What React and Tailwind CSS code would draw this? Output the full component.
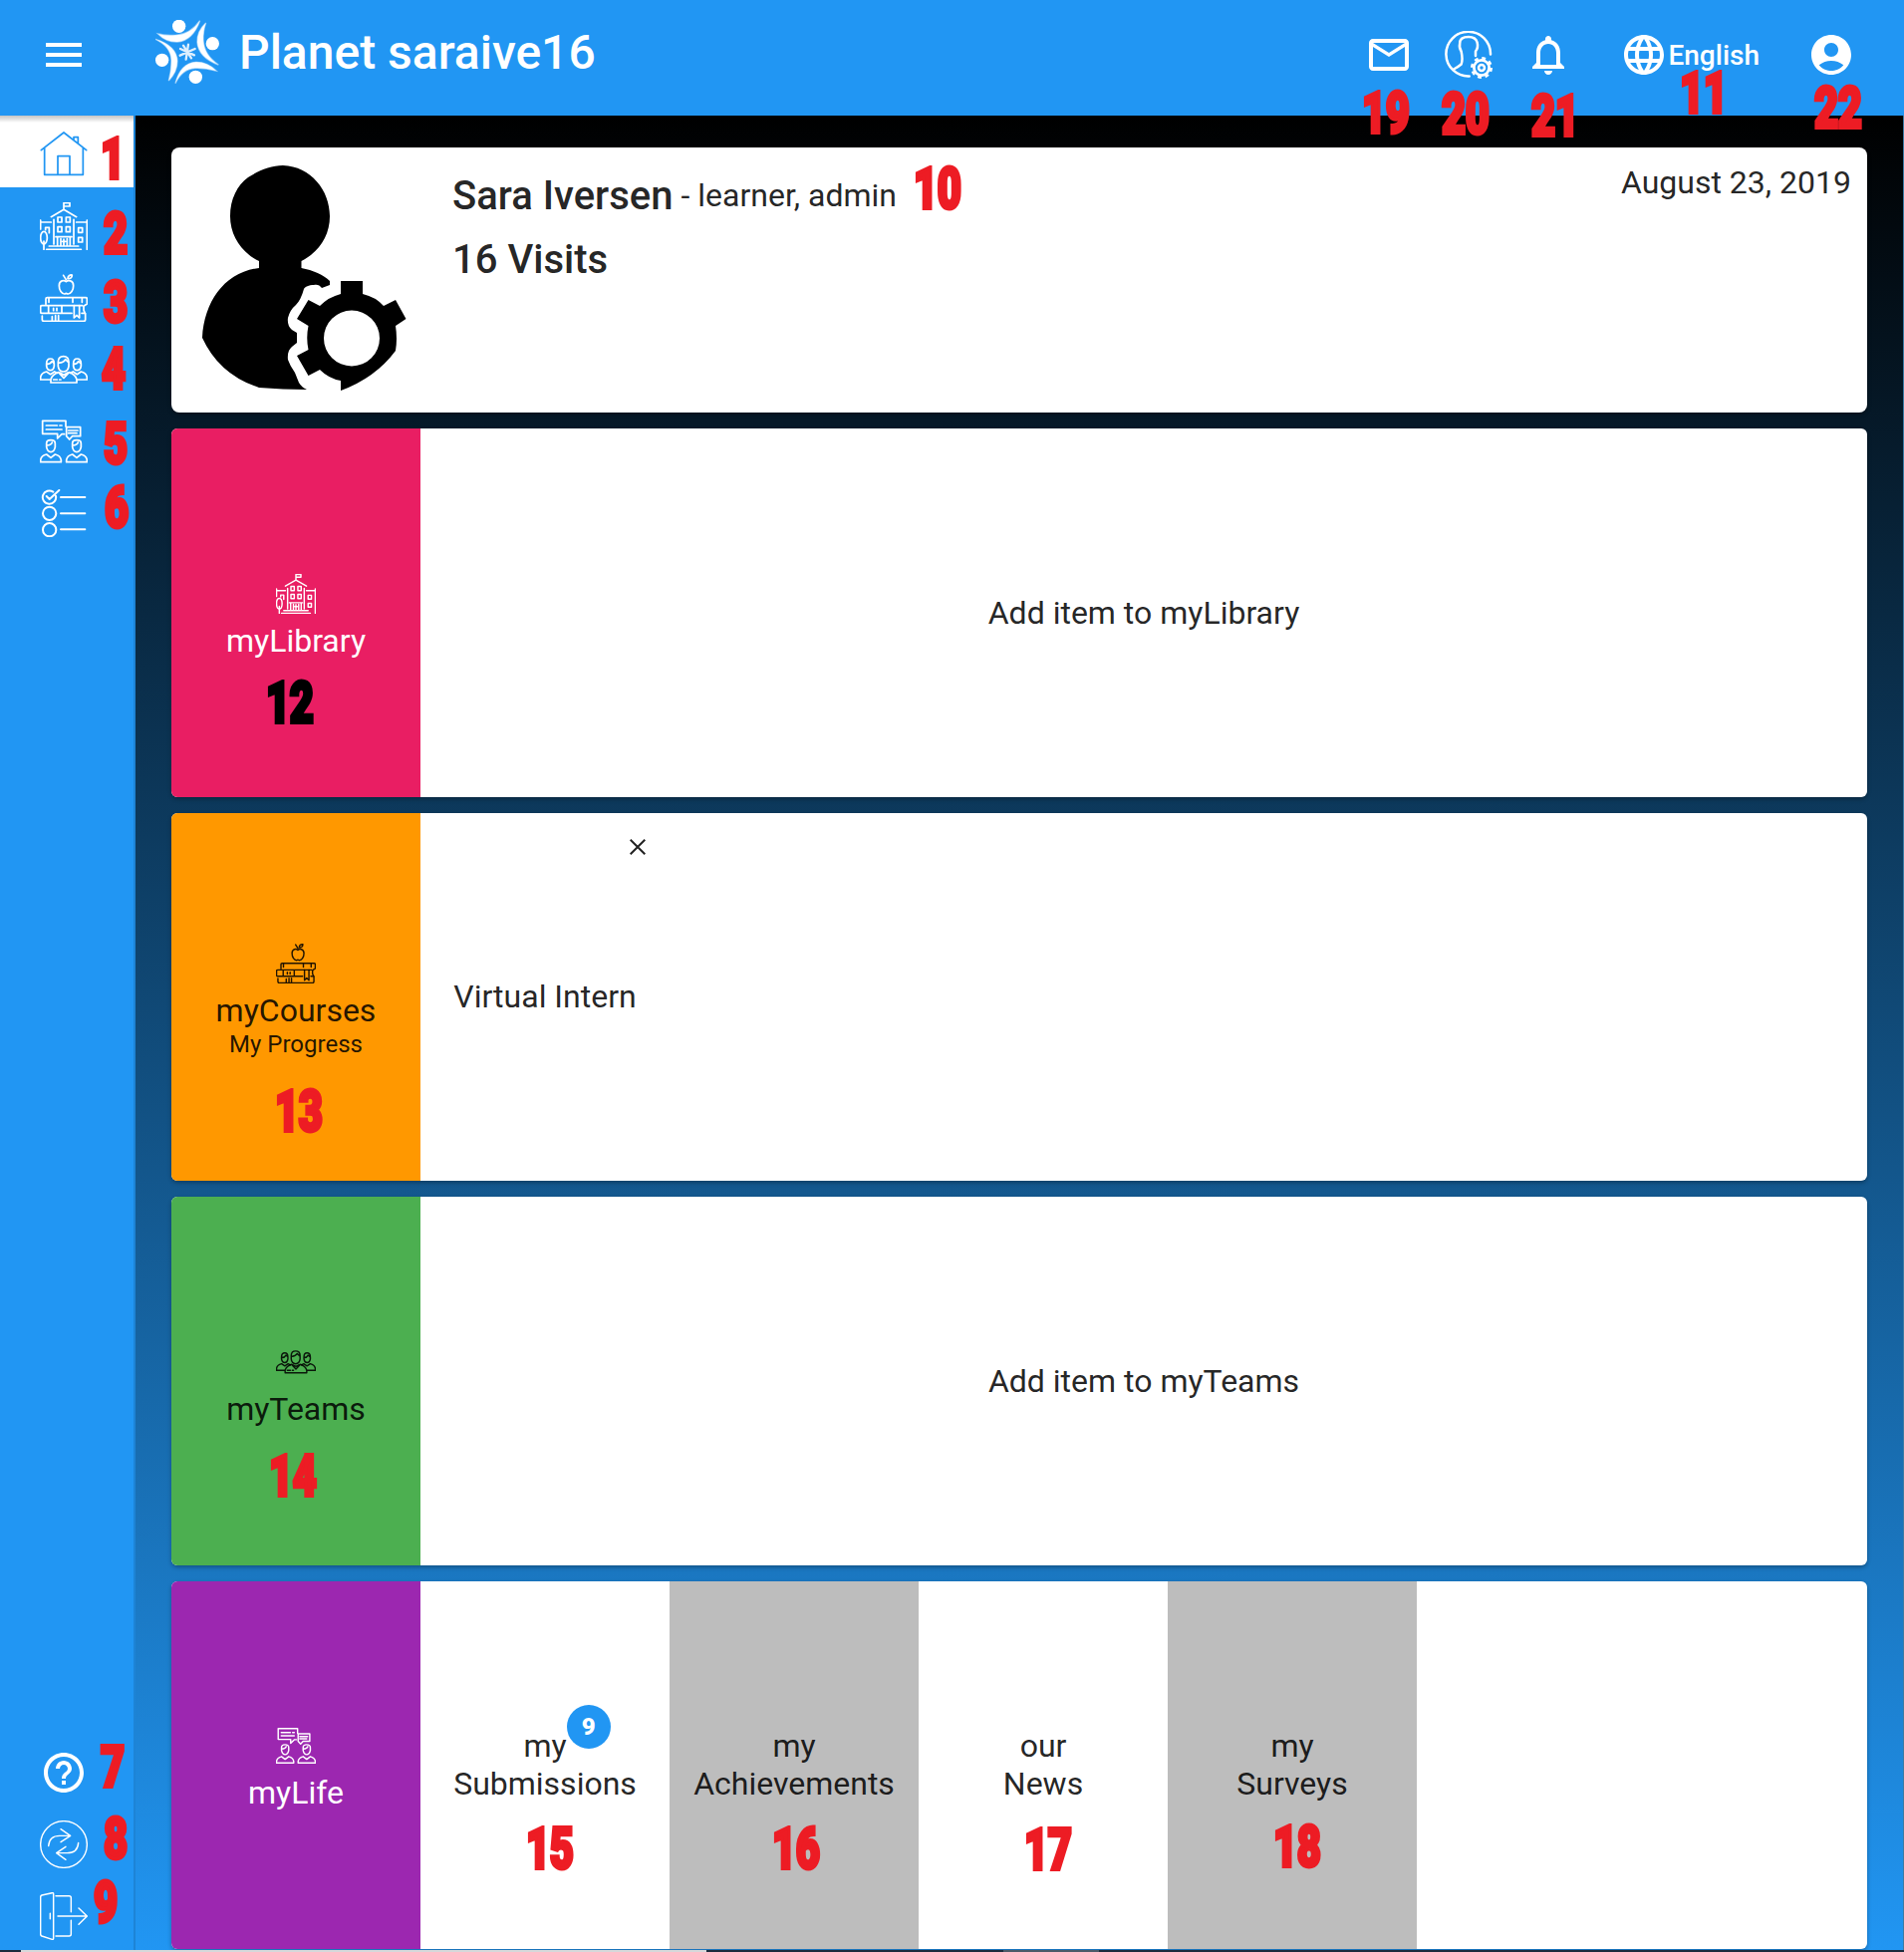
import React from "react";
import {
  MdMenu,
  MdMailOutline,
  MdNotificationsNone,
  MdLanguage,
  MdAccountCircle,
  MdHelpOutline,
} from "react-icons/md";

function LineIcon({ viewBox, className, width = 5.2, children }) {
  return (
    <svg
      viewBox={viewBox}
      className={className}
      fill="none"
      stroke="currentColor"
      strokeWidth={width}
      strokeLinecap="round"
      strokeLinejoin="round"
    >
      {children}
    </svg>
  );
}

const HomeIcon = ({ className }) => (
  <LineIcon viewBox="120 63 144 144" className={className}>
    <path d="M124 122L192 69L260 122M134 116V196H250V116M174 196V140H210V196M222 92V83H235V102" />
  </LineIcon>
);

const SchoolIcon = ({ className }) => (
  <LineIcon viewBox="120 279 144 144" className={className}>
    <path d="M192 300V281H210V291H194M154 323L192 301L230 323M162 331V405M222 331V405" />
    <path d="M122 333V360M124 339H154M230 339H262M262 333V421" />
    <ellipse cx="132" cy="386" rx="10" ry="19" />
    <path d="M132 396V421M137 362V355H148V371" />
    <path d="M174 324h12v15h-12zM199 324h12v15h-12zM174 353h12v15h-12zM199 353h12v15h-12zM236 356h12v14h-12zM236 385h12v14h-12z" />
    <path d="M168 383H216M173 383V408M211 383V408M183 389V408M202 389V408M192 390V408M188 397H197M148 411H236M140 421H244" />
  </LineIcon>
);

const BooksIcon = ({ className }) => (
  <LineIcon viewBox="120 495 144 144" className={className}>
    <path d="M199 518c-5-5-21-5-21 12c0 14 8 25 16 25c3 0 4-2 5-2c1 0 3 2 6 2c8 0 16-11 16-25c0-17-17-17-22-12z" />
    <path d="M199 512L191 499M204 509c0-8 6-12 13-11c0 8-5 12-13 11z" />
    <path d="M138 586V570Q138 566 142 566H258Q262 566 262 570V585L254 590M147 566v14M219 566v14M247 566v14" />
    <path d="M248 590H126Q122 590 122 594V609Q122 613 126 613H216M252 592V604L256 613H246M146 590V613M186 590V613M161 598v7M171 598v7" />
    <path d="M223 590V627L231 619L239 627V590M127 621V632Q127 637 132 637H252Q257 637 257 632V614M157 623v12M167 620v15M176 620v15" />
  </LineIcon>
);

const TeamsIcon = ({ className }) => (
  <LineIcon viewBox="120 711 144 144" className={className}>
    <path d="M175 760Q175 743 191 743Q207 743 207 760V772Q205 789 191 789Q177 789 175 772ZM176 762Q190 763 197 752L207 762" />
    <path d="M140 765Q140 750 152 750Q163 750 163 765V772Q161 785 152 785Q142 785 140 772ZM141 767Q152 766 156 758L163 764" />
    <path d="M221 765Q221 750 232 750Q244 750 244 765V772Q242 785 232 785Q223 785 221 772ZM222 767Q232 766 236 758L243 764" />
    <path d="M150 813H122V806Q124 793 140 789L152 797L164 789L172 793M234 813H262V806Q260 793 244 789L232 797L220 789L212 793" />
    <path d="M153 822V812Q158 797 176 791L192 808L208 791Q226 797 231 812V822ZM180 792L192 799L204 792M161 813H172M179 813H183" />
  </LineIcon>
);

const ChatIcon = ({ className }) => (
  <LineIcon viewBox="120 927 144 144" className={className}>
    <path d="M198 954V937H128V976H173V990L186 977H194M139 951H172M180 951H186M139 963H186" />
    <path d="M200 956H242V983H218L209 993L200 983ZM206 966H234M206 974H231" />
    <path d="M140 1005Q140 995 153 995Q166 995 166 1005V1016Q163 1031 153 1031Q143 1031 140 1016ZM141 1011Q154 1010 157 1002" />
    <path d="M122 1061V1055Q124 1042 140 1038L153 1048L166 1038Q182 1042 184 1055V1061Z" />
    <path d="M218 1005Q218 995 231 995Q244 995 244 1005V1016Q241 1031 231 1031Q221 1031 218 1016ZM219 1011Q232 1010 235 1002" />
    <path d="M200 1061V1055Q202 1042 218 1038L231 1048L244 1038Q260 1042 262 1055V1061Z" />
  </LineIcon>
);

const SurveyIcon = ({ className }) => (
  <LineIcon viewBox="120 1143 144 144" className={className} width={6}>
    <path d="M160 1151A20 20 0 1 0 168 1163M140 1164L149 1173L178 1146" />
    <circle cx="149" cy="1216" r="20" />
    <circle cx="149" cy="1265" r="20" />
    <path d="M183 1167H256M183 1216H256M183 1264H256" />
  </LineIcon>
);

const SyncIcon = ({ className }) => (
  <LineIcon viewBox="120 321 144 144" className={className} width={4.2}>
    <circle cx="192" cy="393" r="70" />
    <path d="M146 398Q148 367 180 367H212M183 347L212 367L183 386M236 388Q234 419 202 419H170M198 400L170 419L198 439" />
  </LineIcon>
);

const LogoutIcon = ({ className }) => (
  <LineIcon viewBox="120 537 144 144" className={className} width={4.4}>
    <path d="M122 552Q122 548 126 546L157 539Q161 538 161 542V676Q161 680 157 679L126 669Q122 667 122 663ZM151 601V617" />
    <path d="M168 548H208Q214 548 214 554V596M214 622V663Q214 669 208 669H168M174 609H262M237 585L262 609L237 634" />
  </LineIcon>
);

const ManagerIcon = ({ className }) => (
  <LineIcon viewBox="0 0 48 48" className={className} width={2.5}>
    <path d="M46 23.5A22.3 22.3 0 1 0 24.7 45.4" />
    <path d="M31 25V20.5Q34 17 32.6 11.5Q31 6 24 6Q15 6 15.2 12.5Q14.2 17 16.6 20.5Q18.5 29 16.6 33.5Q13 36.5 9 38.5" />
    <circle cx="37" cy="37" r="3" />
    <circle cx="37" cy="37" r="7.6" strokeWidth="2.8" />
    <circle cx="37" cy="37" r="9.6" strokeWidth="2.8" strokeLinecap="butt" strokeDasharray="3.77 3.77" />
  </LineIcon>
);

const Logo = () => (
  <svg viewBox="30 30 192 192" className="size-16" fill="white">
    <circle cx="101" cy="49" r="20" />
    <circle cx="202" cy="101" r="20" />
    <circle cx="50" cy="151" r="20" />
    <circle cx="151" cy="202" r="20" />
    <g stroke="white" strokeWidth="4" strokeOpacity="0.5">
      <path d="M38 72Q60 78 90 76Q135 74 164 32Q142 92 96 96Q62 97 38 72Z" />
      <path d="M182 39Q173 62 174 92Q177 137 220 165Q160 143 156 97Q155 64 182 39Z" />
      <path d="M30 88Q76 110 78 150Q79 180 70 213Q96 186 96 154Q94 108 30 88Z" />
      <path d="M90 221Q110 178 150 175Q180 174 213 183Q186 156 152 157Q106 160 90 221Z" />
    </g>
    <path
      d="M129 104L122 149M105 117L147 136M149 117L104 137M114 107L138 145"
      stroke="white"
      strokeWidth="7"
      strokeOpacity="0.85"
      strokeLinecap="round"
    />
  </svg>
);

const Avatar = () => (
  <svg viewBox="200 160 210 236" className="ml-7 mt-3 h-[236px] w-[210px] shrink-0" fill="black">
    <path d="M284 166C312 167 331 191 331 217C331 237 320 253 302.500 262V269C314 271 325 276 331 282V286L323 289C321 286 318 285 315 286C310 286 306 288 305 290Q302 301 297 306Q291 311 289 319Q288 327 293 331L298 334V344L293 348Q288 352 289 361Q291 367 296 374L300 384Q303 389 308 391Q284 391 260 389Q220 376 203 339C205 302 226 273 260 269V262C243 254 231 237 231 217C231 200 238 186 249 178C260 171 272 166 284 166Z" />
    <path
      fillRule="evenodd"
      d="M342 282H364V295Q377 298 385 307L397 301L407.500 320L397 327Q399 340 397 352Q377 379 342 392V382Q330 380 321 371L309.500 377L298 357L309.500 351Q307 339 309.500 327L298 320L309.500 301L321 307Q330 298 342 295ZM353 311.500A28 28 0 1 0 353 367.500A28 28 0 1 0 353 311.500Z"
    />
  </svg>
);

const sideTop = [SchoolIcon, BooksIcon, TeamsIcon, ChatIcon, SurveyIcon];

function Card({ color, icon: Icon, title, subtitle, children }) {
  return (
    <section className="flex overflow-hidden rounded-md bg-white shadow-[0_2px_4px_rgba(0,0,0,0.3)]">
      <div
        className={`flex w-[250px] shrink-0 flex-col items-center justify-center ${subtitle ? "pt-[9px]" : "pt-[7px]"} ${color}`}
      >
        <Icon className="mb-[9px] size-10" />
        <h2 className="leading-9">{title}</h2>
        {subtitle && <span className="mt-px text-2xl leading-[30px]">{subtitle}</span>}
      </div>
      {children}
    </section>
  );
}

const Empty = ({ children }) => (
  <div className="flex flex-1 items-center justify-center">{children}</div>
);

const lifeTiles = [
  { a: "my", b: "Submissions", badge: 9, bg: "bg-white" },
  { a: "my", b: "Achievements", bg: "bg-[#bdbdbd]" },
  { a: "our", b: "News", bg: "bg-white" },
  { a: "my", b: "Surveys", bg: "bg-[#bdbdbd]" },
];

const red = "text-[#ed1c24]";
const marks = [
  { n: 1, c: "left-[101px] top-[130px]" },
  { n: 2, c: "left-[104px] top-[205px]" },
  { n: 3, c: "left-[104px] top-[274px]" },
  { n: 4, c: "left-[102px] top-[341px]" },
  { n: 5, c: "left-[104px] top-[416px]" },
  { n: 6, c: "left-[105px] top-[480px]" },
  { n: 7, c: "left-[101px] top-[1744px]" },
  { n: 8, c: "left-[104px] top-[1816px]" },
  { n: 9, c: "left-[94px] top-[1880px]" },
  { n: 10, c: "left-[917px] top-[160px]" },
  { n: 11, c: "left-[1686px] top-[64px]" },
  { n: 12, c: "left-[267px] top-[676px]", color: "text-black" },
  { n: 13, c: "left-[276px] top-[1086px]" },
  { n: 14, c: "left-[270px] top-[1452px]" },
  { n: 15, c: "left-[528px] top-[1826px]" },
  { n: 16, c: "left-[775px] top-[1826px]" },
  { n: 17, c: "left-[1028px] top-[1827px]" },
  { n: 18, c: "left-[1278px] top-[1824px]" },
  { n: 19, c: "left-[1367px] top-[84px]" },
  { n: 20, c: "left-[1447px] top-[85px]" },
  { n: 21, c: "left-[1537px] top-[87px]" },
  { n: 22, c: "left-[1821px] top-[79px]" },
];

export default function App() {
  return (
    <div className="relative flex h-[1959px] w-[1911px] flex-col overflow-hidden bg-[#2196f3] font-['Roboto',sans-serif] text-[32px] text-black/87">
      <header className="z-10 flex h-[116px] shrink-0 items-center bg-[#2196f3] pl-10 text-white">
        <MdMenu className="mt-[-6px] size-12" />
        <div className="ml-[68px] mt-[-12px]">
          <Logo />
        </div>
        <h1 className="ml-5 mt-[-10px] text-[48px] font-medium leading-none">Planet saraive16</h1>
        <div className="ml-auto mt-[-6px] flex items-center pr-[49px]">
          <MdMailOutline className="size-12" />
          <ManagerIcon className="ml-8 size-12" />
          <MdNotificationsNone className="ml-8 size-12" />
          <MdLanguage className="ml-12 size-12" />
          <span className="mt-0.5 text-[28px] font-medium leading-8">English</span>
          <MdAccountCircle className="ml-12 size-12" />
        </div>
      </header>

      <div className="flex min-h-0 flex-1">
        <nav className="flex w-[136px] shrink-0 flex-col border-r-2 border-[#1d84d6] pb-3 text-white">
          <div className="flex h-[72px] items-center bg-white bg-linear-to-b from-[#c4c4c4] to-white to-[7px] pl-10 pt-1.5 text-[#2196f3]">
            <HomeIcon className="size-12" />
          </div>
          <div className="flex flex-col gap-6 pl-10 pt-[15px]">
            {sideTop.map((Icon, i) => (
              <Icon key={i} className="size-12" />
            ))}
          </div>
          <div className="mt-auto flex flex-col gap-6 pl-10">
            <MdHelpOutline className="size-12" />
            <SyncIcon className="size-12" />
            <LogoutIcon className="size-12" />
          </div>
        </nav>

        <main className="flex flex-1 flex-col gap-4 border-r border-[#3b7ba3] bg-linear-to-b/srgb from-black to-[#2196f3] pb-[3px] pl-9 pr-9 pt-8">
          <section className="flex h-[266px] shrink-0 rounded-lg bg-white shadow-[0_2px_4px_rgba(0,0,0,0.3)]">
            <Avatar />
            <div className="ml-11 mt-[17px] flex flex-1 flex-col">
              <div className="flex h-16 items-center gap-2 whitespace-pre">
                <span className="text-[40px] font-medium">Sara Iversen</span>
                <span className="-mt-0.5">- learner, admin</span>
              </div>
              <span className="flex h-16 items-center text-[40px] font-medium">16 Visits</span>
            </div>
            <time className="mr-4 mt-4 leading-[38px]">August 23, 2019</time>
          </section>

          <div className="grid min-h-0 flex-1 grid-rows-4 gap-4">
            <Card color="bg-[#e91e63] text-white" icon={SchoolIcon} title="myLibrary">
              <Empty>Add item to myLibrary</Empty>
            </Card>
            <Card color="bg-[#ff9800]" icon={BooksIcon} title="myCourses" subtitle="My Progress">
              <div className="relative flex w-[250px] items-center justify-center">
                Virtual Intern
                <svg viewBox="0 0 16 16" className="absolute right-6 top-[26px] size-4" stroke="currentColor" strokeWidth="2">
                  <path d="M.7.7L15.300 15.300M15.300.7L.7 15.300" />
                </svg>
              </div>
            </Card>
            <Card color="bg-[#4caf50]" icon={TeamsIcon} title="myTeams">
              <Empty>Add item to myTeams</Empty>
            </Card>
            <Card color="bg-[#9c27b0] text-white" icon={ChatIcon} title="myLife">
              {lifeTiles.map((t) => (
                <div
                  key={t.b}
                  className={`flex w-[250px] flex-col items-center justify-center pt-px leading-[37.500px] ${t.bg}`}
                >
                  <span className="relative">
                    {t.a}
                    {t.badge && (
                      <span className="absolute -top-[23px] left-full flex size-11 items-center justify-center rounded-full bg-[#2196f3] text-2xl font-black text-white">
                        {t.badge}
                      </span>
                    )}
                  </span>
                  <span>{t.b}</span>
                </div>
              ))}
            </Card>
          </div>
        </main>
      </div>

      <footer className="absolute inset-x-0 bottom-0 flex h-0.5 bg-[#1b2c3c]">
        <div className="ml-[21px] h-full w-[688px] bg-[#d6d8da]" />
        <div className="ml-[298px] h-full w-24 bg-[#4b5b68]" />
      </footer>

      {marks.map((m) => (
        <span
          key={m.n}
          className={`absolute z-20 origin-top-left scale-x-[0.73] text-[57px] font-black leading-[60px] tracking-[-0.5px] [-webkit-text-stroke:4px_currentColor] ${m.c} ${m.color || red}`}
        >
          {m.n}
        </span>
      ))}
    </div>
  );
}
